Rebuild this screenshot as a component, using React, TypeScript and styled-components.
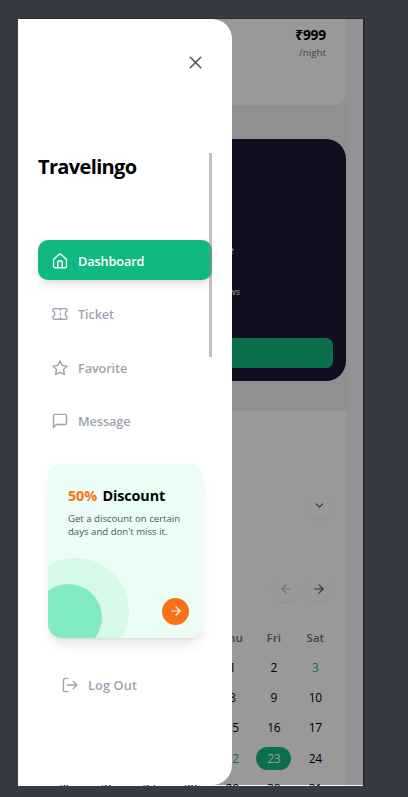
import React from 'react';
import styled, { createGlobalStyle } from 'styled-components';
import { ArrowLeft, ArrowRight, ChevronDown, X } from 'lucide-react';

const GlobalStyle = createGlobalStyle`
  *, *::before, *::after { box-sizing: border-box; }
  body {
    margin: 0;
    background: #383a43;
    color: #000;
    font-family: 'Open Sans', 'Noto Sans', sans-serif;
    overflow: hidden;
  }
`;

const Stage = styled.main`
  height: 797px;
  padding: 18px 0 0 18px;
  overflow: hidden;
`;

const Screen = styled.div`
  position: relative;
  width: 347px;
  height: 768px;
  overflow: hidden;
  border-top: 1px solid #2c2c30;
  border-right: 2px solid #2b2b2d;
  background: linear-gradient(90deg, #f1f1f4 0 328px, #f4f6f8 336px);
`;

const Page = styled.div`
  display: flex;
  flex-direction: column;
  width: 328.4px;
  height: 767px;
`;

const HotelCard = styled.section`
  display: flex;
  flex-direction: column;
  align-items: flex-end;
  height: 86px;
  padding: 7px 20.4px 0 0;
  background: #fff;
  border-bottom-right-radius: 13px;
`;

const Price = styled.div`
  font: 700 13.8px/18px 'Noto Sans', sans-serif;
  letter-spacing: -0.2px;
`;

const PerNight = styled.div`
  color: #6b7280;
  font-size: 9.8px;
  line-height: 17px;
`;

const Promo = styled.section`
  display: flex;
  flex-direction: column;
  height: 242px;
  margin-top: 34px;
  padding: 102px 13.5px 13px 0;
  border-radius: 20px;
  background: #1c1938;
  color: #fff;
`;

const PromoLine = styled.div<{ $end: number; $size: number; $gap: number }>`
  width: ${p => p.$end}px;
  margin-bottom: ${p => p.$gap}px;
  font-size: ${p => p.$size}px;
  line-height: 18px;
  text-align: right;
  white-space: nowrap;
`;

const PromoButton = styled.button`
  height: 30px;
  margin-top: auto;
  border: 0;
  border-radius: 7px;
  background: #10b981;
`;

const Calendar = styled.section`
  flex: 1;
  min-height: 0;
  margin-top: 30px;
  padding-top: 80.5px;
  background: #fff;
  overflow: hidden;
`;

const Controls = styled.div<{ $top: number }>`
  display: flex;
  justify-content: flex-end;
  gap: 6.5px;
  margin-top: ${p => p.$top}px;
  padding-right: 13.5px;
`;

const RoundButton = styled.button<{ $muted?: boolean }>`
  display: grid;
  place-items: center;
  width: 27px;
  height: 27px;
  padding: 0;
  border: 0;
  border-radius: 50%;
  background: #fff;
  box-shadow: 0 1px 2px rgba(0, 0, 0, 0.07);
  color: ${p => (p.$muted ? '#b9bcc4' : '#4b5563')};
`;

const Weekdays = styled.div`
  display: grid;
  grid-template-columns: repeat(7, 41.6px);
  margin: 25.5px 0 4.5px 27px;
  color: #6b7280;
  font-size: 11.5px;
  font-weight: 600;
  line-height: 20px;
  text-align: center;
`;

const Week = styled.div`
  display: grid;
  grid-template-columns: repeat(7, 41.6px);
  align-items: center;
  height: 30.4px;
  margin-left: 27px;
  font-size: 12px;
  text-align: center;
`;

const Day = styled.span<{ $tone?: 'green' | 'picked' }>`
  justify-self: center;
  width: 35px;
  height: 23px;
  border-radius: 12px;
  line-height: 23px;
  letter-spacing: -0.3px;
  background: ${p => (p.$tone === 'picked' ? '#10b981' : 'transparent')};
  color: ${p => (p.$tone === 'picked' ? '#fff' : p.$tone === 'green' ? '#10b981' : 'inherit')};
`;

const Backdrop = styled.div`
  position: absolute;
  inset: 0;
  height: 766px;
  background: rgba(0, 0, 0, 0.4);
`;

const Drawer = styled.aside`
  position: absolute;
  top: 0;
  left: 0;
  display: flex;
  flex-direction: column;
  width: 214.4px;
  height: 766px;
  padding: 33px 20px 0;
  border-radius: 0 20px 20px 0;
  background: #fff;
`;

const CloseButton = styled.button`
  align-self: flex-end;
  display: grid;
  margin-right: 6px;
  padding: 0;
  border: 0;
  background: none;
  color: #4b5563;
`;

const Scroller = styled.div`
  position: relative;
  margin-top: 80px;
`;

const ScrollThumb = styled.div`
  position: absolute;
  top: 0;
  right: 0;
  width: 3.4px;
  height: 204px;
  background: rgba(136, 136, 136, 0.53);
`;

const Brand = styled.h1`
  height: 87px;
  margin: 0;
  font-size: 20px;
  font-weight: 700;
  line-height: 28px;
  letter-spacing: -0.65px;
`;

const Nav = styled.nav`
  display: flex;
  flex-direction: column;
  gap: 13.6px;
`;

const NavItem = styled.a<{ $active?: boolean; $indent?: boolean }>`
  display: flex;
  align-items: center;
  gap: 10.5px;
  height: 40px;
  padding: 1px 0 0 ${p => (p.$indent ? 23.5 : 13.5)}px;
  border-radius: 10px;
  background: ${p => (p.$active ? '#10b981' : 'transparent')};
  box-shadow: ${p => (p.$active ? '0 7px 10px -2px rgba(0,0,0,.1), 0 3px 4px -3px rgba(0,0,0,.1)' : 'none')};
  color: ${p => (p.$active ? '#fff' : '#9ca3af')};
  font-size: 12.7px;
  font-weight: 600;
  letter-spacing: ${p => (p.$indent ? 0.15 : -0.1)}px;
  svg { flex: none; }
`;

const Offer = styled.section`
  position: relative;
  display: flex;
  flex-direction: column;
  width: 155px;
  height: 174px;
  margin: 23px 0 27px 10px;
  padding: 20px 14px 13px 20px;
  border-radius: 14px;
  background: #ecfdf5;
  box-shadow: 0 9px 13px -3px rgba(0, 0, 0, 0.1), 0 3px 5px -3px rgba(0, 0, 0, 0.1);
  overflow: hidden;
`;

const OfferTitle = styled.h2`
  margin: 0;
  font-size: 14.4px;
  font-weight: 700;
  line-height: 23px;
  letter-spacing: -0.15px;
  word-spacing: 2px;
  white-space: nowrap;
  span { color: #f97316; }
`;

const OfferText = styled.p`
  margin: 5px 0 0;
  color: #4b5563;
  font-size: 9.6px;
  line-height: 13.3px;
  white-space: nowrap;
`;

const Bubble = styled.i<{ $size: number; $left: number; $top: number; $color: string }>`
  position: absolute;
  left: ${p => p.$left}px;
  top: ${p => p.$top}px;
  width: ${p => p.$size}px;
  height: ${p => p.$size}px;
  border-radius: 50%;
  background: ${p => p.$color};
`;

const OfferButton = styled.button`
  display: grid;
  place-items: center;
  align-self: flex-end;
  width: 27px;
  height: 27px;
  margin-top: auto;
  padding: 0;
  border: 0;
  border-radius: 50%;
  background: #f97316;
  color: #fff;
`;

const LineIcon = styled.svg.attrs({ width: 16, height: 16, viewBox: '0 0 16 16' })`
  fill: none;
  stroke: currentColor;
  stroke-width: 1.4px;
  stroke-linecap: round;
  stroke-linejoin: round;
`;

const HomeIcon = () => (
  <LineIcon>
    <path d="M1.5 7.2c0-.6.25-1.1.7-1.500L7 1.400c.6-.5 1.400-.5 2 0l4.800 4.300c.45.4.7.9.7 1.500v5.600a1.900 1.900 0 0 1-1.900 1.900H3.400a1.900 1.900 0 0 1-1.900-1.900z" />
    <path d="M5.8 14.5V9a1.200 1.200 0 0 1 1.200-1.200h2A1.200 1.200 0 0 1 10.200 9v5.500" />
  </LineIcon>
);

const TicketIcon = () => (
  <LineIcon>
    <path d="M.9 3.9c0-.8.6-1.300 1.300-1.300h11.600c.7 0 1.300.5 1.300 1.300v1.300a2.850 2.850 0 0 0 0 5.400v1.300c0 .8-.6 1.300-1.300 1.300H2.200c-.7 0-1.300-.5-1.300-1.300v-1.300a2.850 2.850 0 0 0 0-5.400z" />
    <path d="M8.4 3v1.300M8.400 7.100v1.600M8.400 11.500v1.300" />
  </LineIcon>
);

const StarIcon = () => (
  <LineIcon>
    <path d="m8 .9 2.150 4.500 4.950.7-3.600 3.450.9 4.950L8 12.100 3.600 14.500l.9-4.950L.9 6.100l4.950-.7z" />
  </LineIcon>
);

const MessageIcon = () => (
  <LineIcon>
    <path d="M1.5 14.400V2.800c0-.8.6-1.400 1.400-1.400h10.200c.8 0 1.400.6 1.400 1.400v7.300c0 .8-.6 1.400-1.400 1.400H4.400z" />
  </LineIcon>
);

const LogoutIcon = () => (
  <LineIcon>
    <path d="M6 14.600H3.300A1.900 1.900 0 0 1 1.400 12.700V3.300A1.900 1.900 0 0 1 3.300 1.400H6M5.400 8h9.600M11.200 4.300 15 8l-3.800 3.700" />
  </LineIcon>
);

const weeks = [
  ['', '', '', '', 1, 2, 3],
  [4, 5, 6, 7, 8, 9, 10],
  [11, 12, 13, 14, 15, 16, 17],
  [18, 19, 20, 21, 22, 23, 24],
  [25, 26, 27, 28, 29, 30, 31],
];

const tones: Record<number, 'green' | 'picked'> = { 3: 'green', 22: 'green', 23: 'picked' };

export default function App() {
  return (
    <>
      <GlobalStyle />
      <Stage>
        <Screen>
          <Page>
            <HotelCard>
              <Price>₹999</Price>
              <PerNight>/night</PerNight>
            </HotelCard>
            <Promo>
              <PromoLine $end={216} $size={11} $gap={24}>e</PromoLine>
              <PromoLine $end={222} $size={9} $gap={0}>ws</PromoLine>
              <PromoButton aria-label="Book" />
            </Promo>
            <Calendar>
              <Controls $top={0}>
                <RoundButton aria-label="Expand"><ChevronDown size={13} /></RoundButton>
              </Controls>
              <Controls $top={56.5}>
                <RoundButton $muted aria-label="Previous"><ArrowLeft size={14} /></RoundButton>
                <RoundButton aria-label="Next"><ArrowRight size={14} /></RoundButton>
              </Controls>
              <Weekdays>
                {['Sun', 'Mon', 'Tue', 'Wed', 'Thu', 'Fri', 'Sat'].map(d => <span key={d}>{d}</span>)}
              </Weekdays>
              {weeks.map((week, i) => (
                <Week key={i}>
                  {week.map((d, j) => <Day key={j} $tone={tones[Number(d)]}>{d}</Day>)}
                </Week>
              ))}
            </Calendar>
          </Page>
          <Backdrop />
          <Drawer>
            <CloseButton aria-label="Close"><X size={21} strokeWidth={1.8} /></CloseButton>
            <Scroller>
              <Brand>Travelingo</Brand>
              <Nav>
                <NavItem $active><HomeIcon />Dashboard</NavItem>
                <NavItem><TicketIcon />Ticket</NavItem>
                <NavItem><StarIcon />Favorite</NavItem>
                <NavItem><MessageIcon />Message</NavItem>
              </Nav>
              <Offer>
                <Bubble $size={107} $left={-26} $top={94} $color="#d7f9e8" />
                <Bubble $size={67} $left={-13} $top={120.5} $color="#83ebc1" />
                <OfferTitle><span>50%</span> Discount</OfferTitle>
                <OfferText>Get a discount on certain<br />days and don't miss it.</OfferText>
                <OfferButton aria-label="View offer"><ArrowRight size={14} /></OfferButton>
              </Offer>
              <NavItem $indent><LogoutIcon />Log Out</NavItem>
              <ScrollThumb />
            </Scroller>
          </Drawer>
        </Screen>
      </Stage>
    </>
  );
}
